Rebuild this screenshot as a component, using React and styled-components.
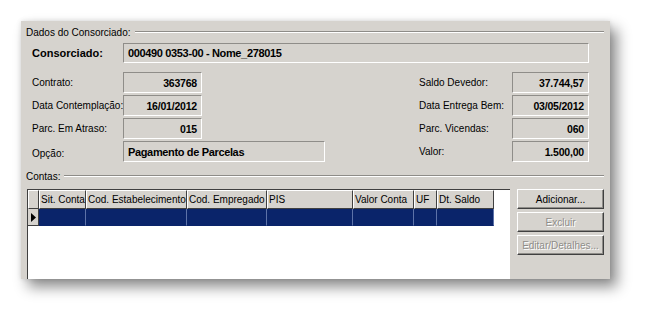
import React from "react";
import styled, { createGlobalStyle, css } from "styled-components";

const Global = createGlobalStyle`
  html, body { margin: 0; padding: 0; background: #ffffff; }
  body { font-family: "Liberation Sans", Arial, sans-serif; font-size: 10px; color: #000; }
`;

const Page = styled.div`
  width: 652px;
  height: 321px;
  padding: 21px 0 0 21px;
  box-sizing: border-box;
  background: #fff;
`;

const Panel = styled.div`
  width: 589px;
  height: 258px;
  background: #d6d3ce;
  box-shadow: 7px 8px 13px rgba(0, 0, 0, 0.45), 0 0 5px rgba(0, 0, 0, 0.12);
  overflow: hidden;
  display: flex;
  flex-direction: column;
  padding: 0 6px 0 5px;
  box-sizing: border-box;
`;

const GroupHeader = styled.div`
  display: flex;
  align-items: center;
  gap: 4px;
  height: 14px;
  flex: none;
  margin-top: ${(p) => p.$top}px;
  white-space: nowrap;
  &::after {
    content: "";
    flex: 1;
    height: 0;
    border-top: 1px solid #8e8c88;
    border-bottom: 1px solid #ffffff;
  }
`;

const sunken = css`
  box-sizing: border-box;
  border-top: 1px solid #8f8d89;
  border-left: 1px solid #8f8d89;
  border-bottom: 1px solid #ffffff;
  border-right: 1px solid #ffffff;
  background: #d6d3ce;
  font-weight: bold;
  display: flex;
  align-items: center;
  white-space: nowrap;
`;

const MainRow = styled.div`
  display: flex;
  align-items: center;
  margin-top: 4px;
  height: 20px;
  flex: none;
  padding-left: 6px;
`;

const BoldLabel = styled.div`
  width: 91px;
  font-weight: bold;
  font-size: 11px;
`;

const Field = styled.div`
  ${sunken};
  width: ${(p) => p.$w}px;
  height: ${(p) => p.$h || 21}px;
  justify-content: ${(p) => (p.$left ? "flex-start" : "flex-end")};
  padding: ${(p) => (p.$left ? "0 0 0 4px" : "0 4px 0 0")};
  font-size: ${(p) => (p.$big ? 11 : 10.5)}px;
  letter-spacing: ${(p) => (p.$big ? -0.35 : -0.2)}px;
`;

const Grid = styled.div`
  display: grid;
  grid-template-columns: 387px 1fr;
  row-gap: 2px;
  margin-top: 9px;
  padding-left: 6px;
  flex: none;
`;

const Row = styled.div`
  display: flex;
  align-items: center;
  height: 21px;
`;

const Label = styled.div`
  width: ${(p) => p.$w}px;
  padding-top: ${(p) => p.$down || 0}px;
  white-space: nowrap;
`;

const Bottom = styled.div`
  display: flex;
  margin-top: 6px;
  gap: 7px;
  flex: 1;
  padding-left: 1px;
`;

const TableBox = styled.div`
  width: 483px;
  box-sizing: border-box;
  border-top: 1px solid #404040;
  border-left: 1px solid #404040;
  background: #fff;
  height: 120px;
`;

const TableGrid = styled.div`
  display: grid;
  grid-template-columns: 11px 47px 101px 80px 86px 61px 23px 57px;
  grid-template-rows: 19px 17px;
  width: 466px;
`;

const HeadCell = styled.div`
  box-sizing: border-box;
  background: #d6d3ce;
  border-top: 1px solid #fff;
  border-left: 1px solid #fff;
  border-right: 1px solid #404040;
  border-bottom: 1px solid #404040;
  padding: 3px 0 0 1px;
  white-space: nowrap;
  overflow: hidden;
`;

const DataCell = styled.div`
  box-sizing: border-box;
  background: #0a246a;
  border-right: 1px solid #5d72a8;
  border-bottom: 1px solid #0a246a;
`;

const Indicator = styled.div`
  box-sizing: border-box;
  background: #d6d3ce;
  border-right: 1px solid #404040;
  border-bottom: 1px solid #404040;
  display: flex;
  align-items: center;
  justify-content: center;
`;

const Buttons = styled.div`
  display: flex;
  flex-direction: column;
  gap: 3px;
`;

const Button = styled.div`
  box-sizing: border-box;
  width: 87px;
  height: 20px;
  background: #d6d3ce;
  border-top: 1px solid #fff;
  border-left: 1px solid #fff;
  border-right: 1px solid #404040;
  border-bottom: 1px solid #404040;
  box-shadow: inset -1px -1px 0 #8f8d89;
  display: flex;
  align-items: center;
  justify-content: center;
  color: ${(p) => (p.$disabled ? "#8f8d89" : "#000")};
  text-shadow: ${(p) => (p.$disabled ? "1px 1px 0 #fff" : "none")};
  white-space: nowrap;
`;

const columns = [
  "Sit. Conta",
  "Cod. Estabelecimento",
  "Cod. Empregado",
  "PIS",
  "Valor Conta",
  "UF",
  "Dt. Saldo",
];

export default function App() {
  return (
    <Page>
      <Global />
      <Panel>
        <GroupHeader $top={4}>Dados do Consorciado:</GroupHeader>
        <MainRow>
          <BoldLabel>Consorciado:</BoldLabel>
          <Field $w={466} $h={20} $left $big>
            000490 0353-00 - Nome_278015
          </Field>
        </MainRow>
        <Grid>
          <Row>
            <Label $w={91}>Contrato:</Label>
            <Field $w={79}>363768</Field>
          </Row>
          <Row>
            <Label $w={93}>Saldo Devedor:</Label>
            <Field $w={77}>37.744,57</Field>
          </Row>
          <Row>
            <Label $w={91}>Data Contemplação:</Label>
            <Field $w={79}>16/01/2012</Field>
          </Row>
          <Row>
            <Label $w={93}>Data Entrega Bem:</Label>
            <Field $w={77}>03/05/2012</Field>
          </Row>
          <Row>
            <Label $w={91}>Parc. Em Atraso:</Label>
            <Field $w={79}>015</Field>
          </Row>
          <Row>
            <Label $w={93}>Parc. Vicendas:</Label>
            <Field $w={77}>060</Field>
          </Row>
          <Row>
            <Label $w={91} $down={3}>Opção:</Label>
            <Field $w={202} $left $big>
              Pagamento de Parcelas
            </Field>
          </Row>
          <Row>
            <Label $w={93}>Valor:</Label>
            <Field $w={77}>1.500,00</Field>
          </Row>
        </Grid>
        <GroupHeader $top={7}>Contas:</GroupHeader>
        <Bottom>
          <TableBox>
            <TableGrid>
              <HeadCell />
              {columns.map((c) => (
                <HeadCell key={c}>{c}</HeadCell>
              ))}
              <Indicator>
                <svg width="5" height="9" viewBox="0 0 5 9">
                  <path d="M0 0 L5 4.5 L0 9 Z" fill="#000" />
                </svg>
              </Indicator>
              {columns.map((c) => (
                <DataCell key={c} />
              ))}
            </TableGrid>
          </TableBox>
          <Buttons>
            <Button>Adicionar...</Button>
            <Button $disabled>Excluir</Button>
            <Button $disabled>Editar/Detalhes...</Button>
          </Buttons>
        </Bottom>
      </Panel>
    </Page>
  );
}
